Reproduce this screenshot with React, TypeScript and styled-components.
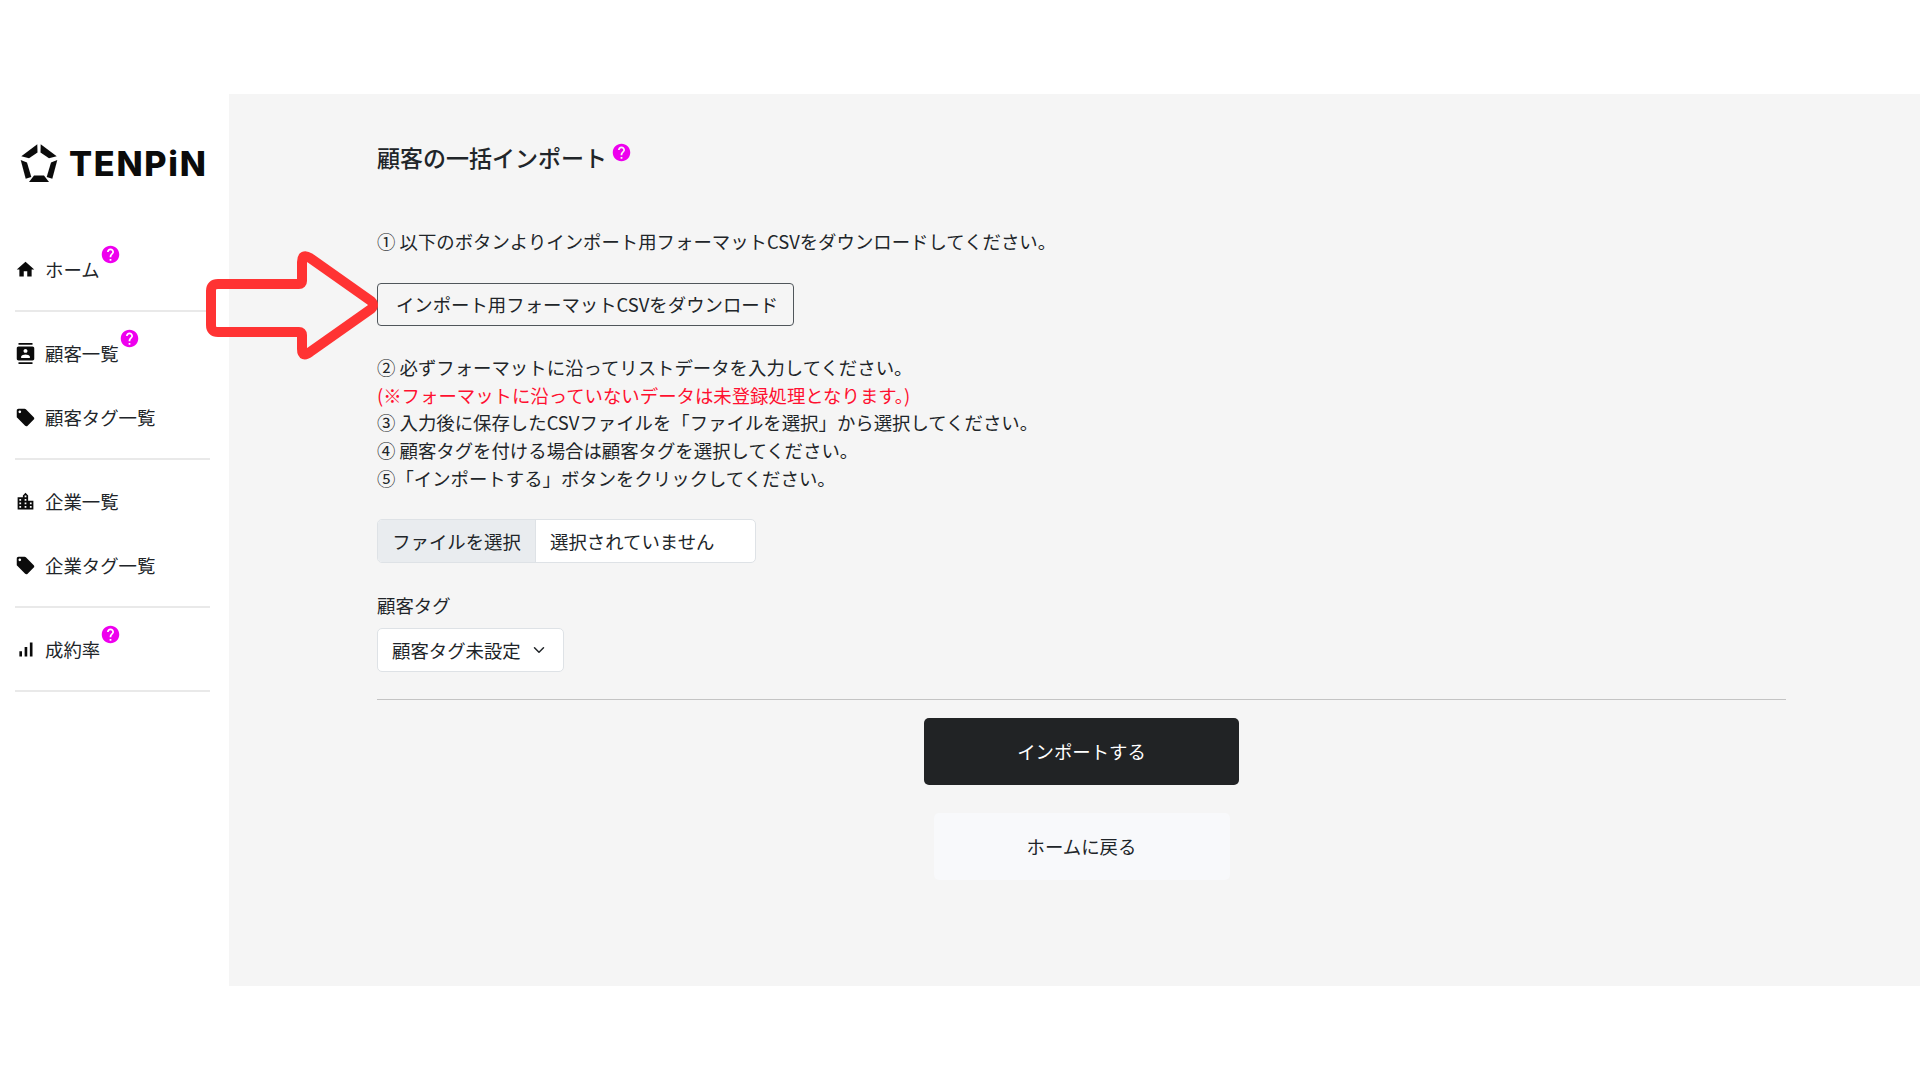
import React from 'react';
import styled, { createGlobalStyle } from 'styled-components';
import { MdHome, MdContacts, MdLocalOffer, MdLocationCity, MdSignalCellularAlt, MdHelp } from 'react-icons/md';
import { FiChevronDown } from 'react-icons/fi';

const GlobalStyle = createGlobalStyle`
  html, body {
    margin: 0;
    padding: 0;
    background: #fff;
  }
  body {
    font-family: "Noto Sans CJK JP", "Noto Sans", sans-serif;
    color: #212529;
  }
  * {
    box-sizing: border-box;
  }
`;

const Page = styled.div`
  position: relative;
  width: 1920px;
  height: 1080px;
  padding: 94px 0;
  overflow: hidden;
`;

const Frame = styled.div`
  display: flex;
  height: 892px;
`;

const Sidebar = styled.aside`
  width: 229px;
  flex: none;
  padding: 49px 19px 0 15px;
`;

const Logo = styled.div`
  display: flex;
  align-items: center;
  gap: 10px;
  height: 42px;
  padding-left: 4px;
  margin-bottom: 43px;
`;

const LogoText = styled.span`
  font-family: "Inter", "Liberation Sans", sans-serif;
  font-size: 34.2px;
  font-weight: 800;
  letter-spacing: 1.7px;
  color: #0b0b0b;
  line-height: 1;
`;

const NavGroup = styled.div`
  display: flex;
  flex-direction: column;
  gap: 24px;
  padding: 21px 0;
  border-bottom: 2px solid #e9e9e9;
`;

const NavItem = styled.div`
  display: flex;
  align-items: center;
  height: 40px;
  font-size: 18.4px;
  color: #212529;
`;

const NavIcon = styled.span`
  display: flex;
  width: 30px;
  font-size: 21px;
  color: #0b0b0b;
`;

const Help = styled(MdHelp)<{ $size: number }>`
  color: #ee00ee;
  font-size: ${props => props.$size}px;
  flex: none;
`;

const NavHelp = styled.span`
  display: flex;
  align-self: flex-start;
  margin-top: -5px;
  margin-left: 0;
`;

const Main = styled.main`
  flex: 1;
  background: #f5f5f5;
  padding: 39px 134px 0 148px;
`;

const TitleRow = styled.div`
  display: flex;
  align-items: flex-start;
  gap: 4px;
  height: 48px;
  margin-bottom: 47px;
`;

const Title = styled.h1`
  margin: 0;
  font-size: 23px;
  font-weight: 500;
  line-height: 48px;
  color: #212529;
`;

const TitleHelp = styled.span`
  display: flex;
  margin-top: 9px;
`;

const Para = styled.p<{ $danger?: boolean }>`
  margin: 0;
  font-size: 18.4px;
  line-height: 27.8px;
  color: ${props => (props.$danger ? '#ff1030' : '#212529')};
`;

const OutlineButton = styled.button`
  display: block;
  height: 43px;
  width: 417px;
  margin: 27px 0 28px;
  padding: 0 0 0 3px;
  border: 1.5px solid #50565b;
  border-radius: 4px;
  background: #f5f5f5;
  font: inherit;
  font-size: 18.4px;
  color: #212529;
`;

const FileInput = styled.div`
  display: flex;
  width: 379px;
  height: 44px;
  margin-top: 26px;
  border: 1px solid #dee2e6;
  border-radius: 5px;
  background: #fff;
  overflow: hidden;
  font-size: 18.4px;
  line-height: 42px;
`;

const FileButton = styled.div`
  width: 158px;
  text-align: center;
  background: #e9ecef;
  border-right: 1px solid #dee2e6;
`;

const FileName = styled.div`
  padding-left: 14px;
`;

const FieldLabel = styled.div`
  margin-top: 28px;
  font-size: 18.4px;
  line-height: 28px;
`;

const Select = styled.div`
  display: flex;
  align-items: center;
  justify-content: space-between;
  width: 187px;
  height: 44px;
  margin-top: 9px;
  padding: 0 15px 0 14px;
  border: 1px solid #dee2e6;
  border-radius: 5px;
  background: #fff;
  font-size: 18.4px;
`;

const Divider = styled.hr`
  margin: 27px 0 18px;
  border: 0;
  border-top: 1px solid #c4c4c4;
`;

const Actions = styled.div`
  display: flex;
  flex-direction: column;
  align-items: center;
  gap: 28px;
`;

const ActionButton = styled.button<{ $primary?: boolean }>`
  width: ${props => (props.$primary ? 315 : 296)}px;
  height: 67px;
  padding: 0;
  border: 0;
  border-radius: 5px;
  background: ${props => (props.$primary ? '#212325' : '#f8f9fb')};
  color: ${props => (props.$primary ? '#fff' : '#212529')};
  font: inherit;
  font-size: 18.4px;
`;

const ArrowOverlay = styled.svg`
  position: absolute;
  left: 200px;
  top: 245px;
  pointer-events: none;
`;

const navGroups = [
  [{ label: 'ホーム', icon: <MdHome />, help: true }],
  [
    { label: '顧客一覧', icon: <MdContacts />, help: true },
    { label: '顧客タグ一覧', icon: <MdLocalOffer /> },
  ],
  [
    { label: '企業一覧', icon: <MdLocationCity /> },
    { label: '企業タグ一覧', icon: <MdLocalOffer /> },
  ],
  [{ label: '成約率', icon: <MdSignalCellularAlt />, help: true }],
];

// five blocks around a hollow pentagon
const LogoMark = () => (
  <svg width="40" height="40" viewBox="0 0 40 40" fill="#0b0b0b">
    <path d="M18.3 0.3 L2.3 12.3 L10 14.2 L18.5 8.5 Z" />
    <path d="M21.7 0.3 L37.7 12.3 L30 14.2 L21.5 8.5 Z" />
    <path d="M1.7 16 L8 18.5 L12.3 33 L6.7 34.7 Z" />
    <path d="M38.3 16 L32 18.5 L27.7 33 L33.3 34.7 Z" />
    <path d="M10 38 L15 31.5 L25 31.5 L30 38 Z" />
  </svg>
);

const App: React.FC = () => {
  return (
    <Page>
      <GlobalStyle />
      <Frame>
        <Sidebar>
          <Logo>
            <LogoMark />
            <LogoText>TENPiN</LogoText>
          </Logo>
          {navGroups.map((group, i) => (
            <NavGroup key={i}>
              {group.map(item => (
                <NavItem key={item.label}>
                  <NavIcon>{item.icon}</NavIcon>
                  {item.label}
                  {item.help && (
                    <NavHelp>
                      <Help $size={21} />
                    </NavHelp>
                  )}
                </NavItem>
              ))}
            </NavGroup>
          ))}
        </Sidebar>
        <Main>
          <TitleRow>
            <Title>顧客の一括インポート</Title>
            <TitleHelp>
              <Help $size={21} />
            </TitleHelp>
          </TitleRow>
          <Para>① 以下のボタンよりインポート用フォーマットCSVをダウンロードしてください。</Para>
          <OutlineButton>インポート用フォーマットCSVをダウンロード</OutlineButton>
          <Para>② 必ずフォーマットに沿ってリストデータを入力してください。</Para>
          <Para $danger>(※フォーマットに沿っていないデータは未登録処理となります。)</Para>
          <Para>③ 入力後に保存したCSVファイルを「ファイルを選択」から選択してください。</Para>
          <Para>④ 顧客タグを付ける場合は顧客タグを選択してください。</Para>
          <Para>⑤「インポートする」ボタンをクリックしてください。</Para>
          <FileInput>
            <FileButton>ファイルを選択</FileButton>
            <FileName>選択されていません</FileName>
          </FileInput>
          <FieldLabel>顧客タグ</FieldLabel>
          <Select>
            顧客タグ未設定
            <FiChevronDown size={18} />
          </Select>
          <Divider />
          <Actions>
            <ActionButton $primary>インポートする</ActionButton>
            <ActionButton>ホームに戻る</ActionButton>
          </Actions>
        </Main>
      </Frame>
      <ArrowOverlay width="180" height="120" viewBox="200 245 180 120">
        <path
          d="M218 284 H299 Q302 284 302 281 V262 Q302 253 310 258 L371 301 Q375 305 371 309 L310 352 Q302 358 302 349 V335 Q302 332 299 332 H218 Q211 332 211 325 V291 Q211 284 218 284 Z"
          fill="none"
          stroke="#ff3333"
          strokeWidth="10"
          strokeLinejoin="round"
        />
      </ArrowOverlay>
    </Page>
  );
};

export default App;
